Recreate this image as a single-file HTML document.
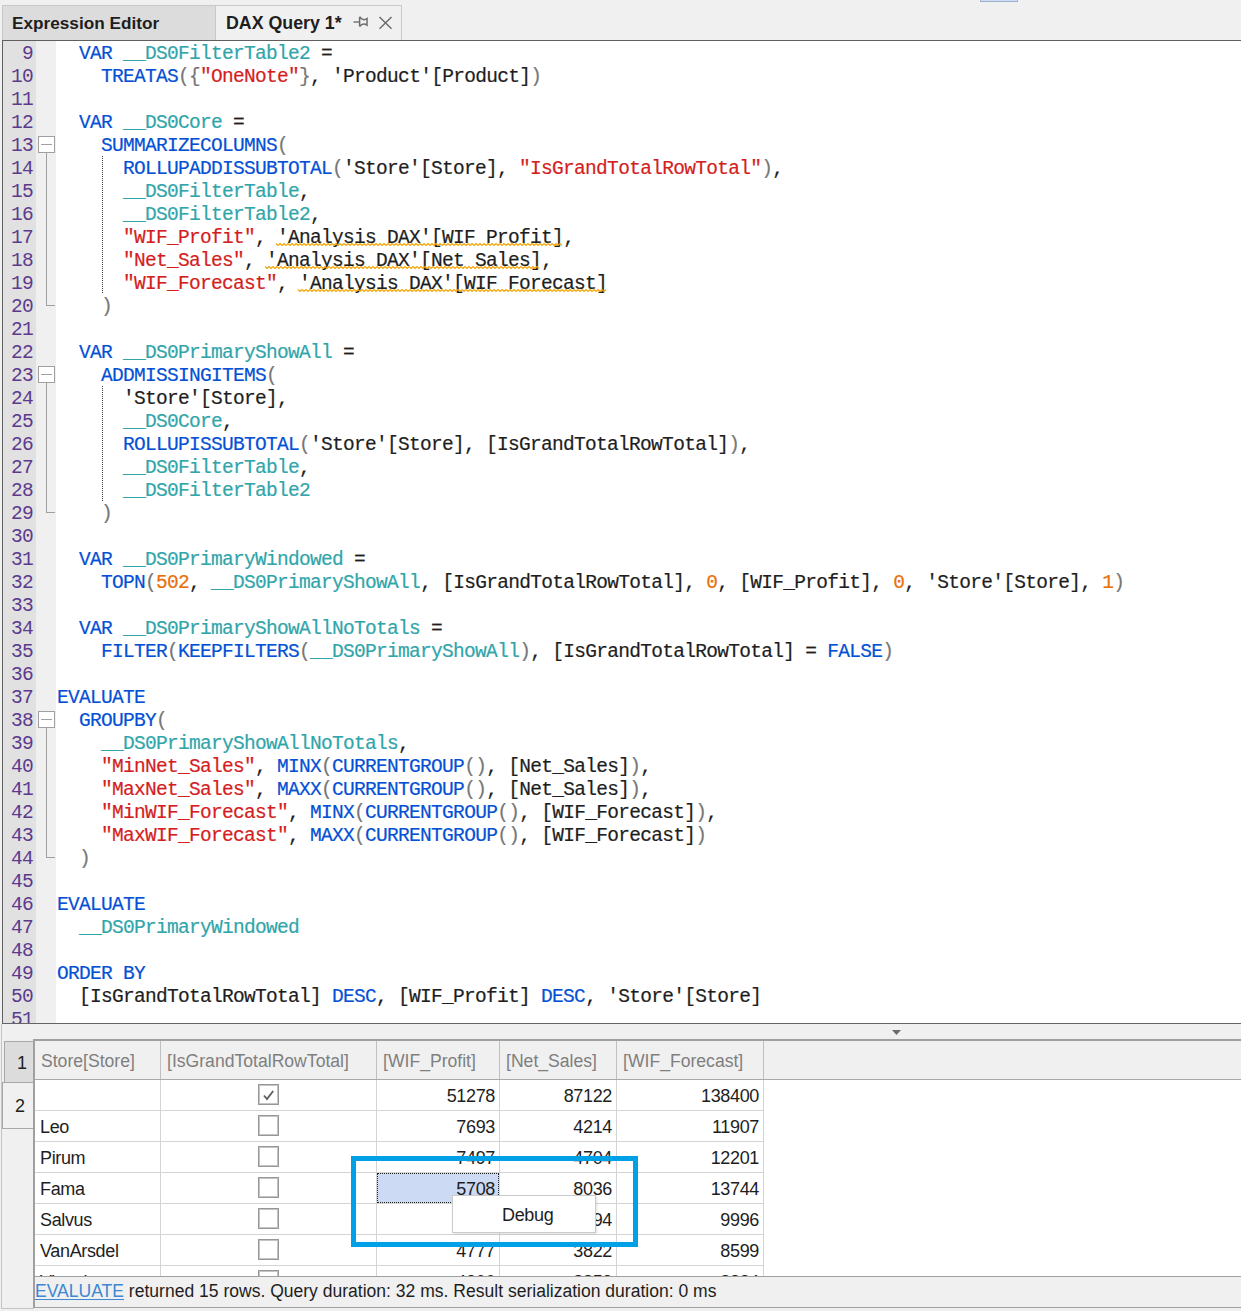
<!DOCTYPE html>
<html><head><meta charset="utf-8">
<style>
*{box-sizing:border-box;margin:0;padding:0}
html,body{width:1241px;height:1311px;overflow:hidden;background:#f0f0f0}
body{position:relative;font-family:"Liberation Sans",sans-serif}
.a{position:absolute}
#mini{left:980px;top:-3px;width:38px;height:5px;background:#cddcf4;border:1px solid #9fb0cc}
#tab1{left:2px;top:5px;width:214px;height:35px;background:#dcdcdc;border:1px solid #c8c8c8;border-bottom:none}
#tab2{left:215px;top:5px;width:187px;height:35px;background:#f0f0f0;border:1px solid #c8c8c8;border-bottom:none}
.tabt{position:absolute;top:7px;font-weight:bold;font-size:17.2px;color:#1e1e1e;white-space:nowrap}
#editor{left:2px;top:40px;width:1239px;height:984px;background:#fff;border-top:1px solid #5f5f5f;border-left:1px solid #5f5f5f;border-bottom:1px solid #646464;overflow:hidden}
#gut{left:0;top:0;width:33px;height:100%;background:#e1e1e1}
#fold{left:33px;top:0;width:20px;height:100%;background:#f0f0f0}
#nums{left:0;top:2px;width:30px;}
.nm{height:23px;line-height:23px;text-align:right;padding-right:0px;font-family:"Liberation Mono",monospace;font-size:19.5px;letter-spacing:-0.7px;color:#5b3a8e}
#code{left:54px;top:2px;}
.ln{height:23px;line-height:23px;white-space:pre;font-family:"Liberation Mono",monospace;font-size:19.5px;letter-spacing:-0.7px;color:#1e1e1e;-webkit-text-stroke:0.2px currentColor}
i{font-style:normal}
.k{color:#0550d4}
.v{color:#30a5aa}
.s{color:#d41e1e}
.n{color:#ea6f0a}
.p{color:#777}
.w{}
.fbox{width:17px;height:17px;border:1px solid #a0a0a0;background:#fff}
.fbox:after{content:"";position:absolute;left:2px;top:7px;width:11px;height:1px;background:#a0a0a0}
.fv{width:1px;background:#a0a0a0}
.fh{height:1px;background:#a0a0a0}
.guide{width:1px;background-image:linear-gradient(#404040 50%,transparent 50%);background-size:1px 2px}
/* grid */
.gl{background:#d4d4d4}
.hdr{font-size:17.6px;color:#7f7f7f;white-space:nowrap}
.cell{font-size:18px;letter-spacing:-0.35px;color:#1e1e1e;white-space:nowrap}
.num{text-align:right}
.cb{width:21px;height:21px;border:1px solid #979797;box-shadow:inset 0 0 0 1px #c4c4c4;background:#fff}
</style></head><body>
<div id="mini" class="a"></div>
<div id="tab1" class="a"><span class="tabt" style="left:9px">Expression Editor</span></div>
<div id="tab2" class="a"><span class="tabt" style="left:10px;font-size:17.8px">DAX Query 1*</span>
<svg class="a" style="left:136px;top:8px" width="20" height="22" viewBox="352 14 20 22"><path d="M353.5 22H359.5" stroke="#6d6d6d" stroke-width="1.4" fill="none"/><path d="M359.6 16.8V26.5M359.6 16.8Q363 21.5 367 18.5V25.2Q363 22.3 359.6 26.5" stroke="#6d6d6d" stroke-width="1.5" fill="none"/></svg>
<svg class="a" style="left:161px;top:9px" width="16" height="16" viewBox="377 15 16 16"><path d="M379.5 17L391.5 28.8M391.5 17L379.5 28.8" stroke="#6d6d6d" stroke-width="1.5" fill="none"/></svg>
</div>
<div id="editor" class="a">
  <div id="gut" class="a"></div>
  <div id="fold" class="a"></div>
  <div id="nums" class="a"><div class="nm">9</div><div class="nm">10</div><div class="nm">11</div><div class="nm">12</div><div class="nm">13</div><div class="nm">14</div><div class="nm">15</div><div class="nm">16</div><div class="nm">17</div><div class="nm">18</div><div class="nm">19</div><div class="nm">20</div><div class="nm">21</div><div class="nm">22</div><div class="nm">23</div><div class="nm">24</div><div class="nm">25</div><div class="nm">26</div><div class="nm">27</div><div class="nm">28</div><div class="nm">29</div><div class="nm">30</div><div class="nm">31</div><div class="nm">32</div><div class="nm">33</div><div class="nm">34</div><div class="nm">35</div><div class="nm">36</div><div class="nm">37</div><div class="nm">38</div><div class="nm">39</div><div class="nm">40</div><div class="nm">41</div><div class="nm">42</div><div class="nm">43</div><div class="nm">44</div><div class="nm">45</div><div class="nm">46</div><div class="nm">47</div><div class="nm">48</div><div class="nm">49</div><div class="nm">50</div><div class="nm">51</div></div>
  <div id="code" class="a"><div class="ln">  <i class="k">VAR</i> <i class="v">__DS0FilterTable2</i> =</div><div class="ln">    <i class="k">TREATAS</i><i class="p">(</i><i class="p">{</i><i class="s">"OneNote"</i><i class="p">}</i>, 'Product'[Product]<i class="p">)</i></div><div class="ln"></div><div class="ln">  <i class="k">VAR</i> <i class="v">__DS0Core</i> =</div><div class="ln">    <i class="k">SUMMARIZECOLUMNS</i><i class="p">(</i></div><div class="ln">      <i class="k">ROLLUPADDISSUBTOTAL</i><i class="p">(</i>'Store'[Store], <i class="s">"IsGrandTotalRowTotal"</i><i class="p">)</i>,</div><div class="ln">      <i class="v">__DS0FilterTable</i>,</div><div class="ln">      <i class="v">__DS0FilterTable2</i>,</div><div class="ln">      <i class="s">"WIF_Profit"</i>, <i class="w">'Analysis DAX'[WIF Profit]</i>,</div><div class="ln">      <i class="s">"Net_Sales"</i>, <i class="w">'Analysis DAX'[Net Sales]</i>,</div><div class="ln">      <i class="s">"WIF_Forecast"</i>, <i class="w">'Analysis DAX'[WIF Forecast]</i></div><div class="ln">    <i class="p">)</i></div><div class="ln"></div><div class="ln">  <i class="k">VAR</i> <i class="v">__DS0PrimaryShowAll</i> =</div><div class="ln">    <i class="k">ADDMISSINGITEMS</i><i class="p">(</i></div><div class="ln">      'Store'[Store],</div><div class="ln">      <i class="v">__DS0Core</i>,</div><div class="ln">      <i class="k">ROLLUPISSUBTOTAL</i><i class="p">(</i>'Store'[Store], [IsGrandTotalRowTotal]<i class="p">)</i>,</div><div class="ln">      <i class="v">__DS0FilterTable</i>,</div><div class="ln">      <i class="v">__DS0FilterTable2</i></div><div class="ln">    <i class="p">)</i></div><div class="ln"></div><div class="ln">  <i class="k">VAR</i> <i class="v">__DS0PrimaryWindowed</i> =</div><div class="ln">    <i class="k">TOPN</i><i class="p">(</i><i class="n">502</i>, <i class="v">__DS0PrimaryShowAll</i>, [IsGrandTotalRowTotal], <i class="n">0</i>, [WIF_Profit], <i class="n">0</i>, 'Store'[Store], <i class="n">1</i><i class="p">)</i></div><div class="ln"></div><div class="ln">  <i class="k">VAR</i> <i class="v">__DS0PrimaryShowAllNoTotals</i> =</div><div class="ln">    <i class="k">FILTER</i><i class="p">(</i><i class="k">KEEPFILTERS</i><i class="p">(</i><i class="v">__DS0PrimaryShowAll</i><i class="p">)</i>, [IsGrandTotalRowTotal] = <i class="k">FALSE</i><i class="p">)</i></div><div class="ln"></div><div class="ln"><i class="k">EVALUATE</i></div><div class="ln">  <i class="k">GROUPBY</i><i class="p">(</i></div><div class="ln">    <i class="v">__DS0PrimaryShowAllNoTotals</i>,</div><div class="ln">    <i class="s">"MinNet_Sales"</i>, <i class="k">MINX</i><i class="p">(</i><i class="k">CURRENTGROUP</i><i class="p">(</i><i class="p">)</i>, [Net_Sales]<i class="p">)</i>,</div><div class="ln">    <i class="s">"MaxNet_Sales"</i>, <i class="k">MAXX</i><i class="p">(</i><i class="k">CURRENTGROUP</i><i class="p">(</i><i class="p">)</i>, [Net_Sales]<i class="p">)</i>,</div><div class="ln">    <i class="s">"MinWIF_Forecast"</i>, <i class="k">MINX</i><i class="p">(</i><i class="k">CURRENTGROUP</i><i class="p">(</i><i class="p">)</i>, [WIF_Forecast]<i class="p">)</i>,</div><div class="ln">    <i class="s">"MaxWIF_Forecast"</i>, <i class="k">MAXX</i><i class="p">(</i><i class="k">CURRENTGROUP</i><i class="p">(</i><i class="p">)</i>, [WIF_Forecast]<i class="p">)</i></div><div class="ln">  <i class="p">)</i></div><div class="ln"></div><div class="ln"><i class="k">EVALUATE</i></div><div class="ln">  <i class="v">__DS0PrimaryWindowed</i></div><div class="ln"></div><div class="ln"><i class="k">ORDER</i> <i class="k">BY</i></div><div class="ln">  [IsGrandTotalRowTotal] <i class="k">DESC</i>, [WIF_Profit] <i class="k">DESC</i>, 'Store'[Store]</div><div class="ln"></div></div>
</div>
<svg class="a" style="left:0;top:0" width="1241" height="1023"><polyline points="276,243.5 278,245.5 280,243.5 282,245.5 284,243.5 286,245.5 288,243.5 290,245.5 292,243.5 294,245.5 296,243.5 298,245.5 300,243.5 302,245.5 304,243.5 306,245.5 308,243.5 310,245.5 312,243.5 314,245.5 316,243.5 318,245.5 320,243.5 322,245.5 324,243.5 326,245.5 328,243.5 330,245.5 332,243.5 334,245.5 336,243.5 338,245.5 340,243.5 342,245.5 344,243.5 346,245.5 348,243.5 350,245.5 352,243.5 354,245.5 356,243.5 358,245.5 360,243.5 362,245.5 364,243.5 366,245.5 368,243.5 370,245.5 372,243.5 374,245.5 376,243.5 378,245.5 380,243.5 382,245.5 384,243.5 386,245.5 388,243.5 390,245.5 392,243.5 394,245.5 396,243.5 398,245.5 400,243.5 402,245.5 404,243.5 406,245.5 408,243.5 410,245.5 412,243.5 414,245.5 416,243.5 418,245.5 420,243.5 422,245.5 424,243.5 426,245.5 428,243.5 430,245.5 432,243.5 434,245.5 436,243.5 438,245.5 440,243.5 442,245.5 444,243.5 446,245.5 448,243.5 450,245.5 452,243.5 454,245.5 456,243.5 458,245.5 460,243.5 462,245.5 464,243.5 466,245.5 468,243.5 470,245.5 472,243.5 474,245.5 476,243.5 478,245.5 480,243.5 482,245.5 484,243.5 486,245.5 488,243.5 490,245.5 492,243.5 494,245.5 496,243.5 498,245.5 500,243.5 502,245.5 504,243.5 506,245.5 508,243.5 510,245.5 512,243.5 514,245.5 516,243.5 518,245.5 520,243.5 522,245.5 524,243.5 526,245.5 528,243.5 530,245.5 532,243.5 534,245.5 536,243.5 538,245.5 540,243.5 542,245.5 544,243.5 546,245.5 548,243.5 550,245.5 552,243.5 554,245.5 556,243.5 558,245.5 560,243.5 562,245.5" fill="none" stroke="#f5a300" stroke-width="1.1"/><polyline points="265,266.5 267,268.5 269,266.5 271,268.5 273,266.5 275,268.5 277,266.5 279,268.5 281,266.5 283,268.5 285,266.5 287,268.5 289,266.5 291,268.5 293,266.5 295,268.5 297,266.5 299,268.5 301,266.5 303,268.5 305,266.5 307,268.5 309,266.5 311,268.5 313,266.5 315,268.5 317,266.5 319,268.5 321,266.5 323,268.5 325,266.5 327,268.5 329,266.5 331,268.5 333,266.5 335,268.5 337,266.5 339,268.5 341,266.5 343,268.5 345,266.5 347,268.5 349,266.5 351,268.5 353,266.5 355,268.5 357,266.5 359,268.5 361,266.5 363,268.5 365,266.5 367,268.5 369,266.5 371,268.5 373,266.5 375,268.5 377,266.5 379,268.5 381,266.5 383,268.5 385,266.5 387,268.5 389,266.5 391,268.5 393,266.5 395,268.5 397,266.5 399,268.5 401,266.5 403,268.5 405,266.5 407,268.5 409,266.5 411,268.5 413,266.5 415,268.5 417,266.5 419,268.5 421,266.5 423,268.5 425,266.5 427,268.5 429,266.5 431,268.5 433,266.5 435,268.5 437,266.5 439,268.5 441,266.5 443,268.5 445,266.5 447,268.5 449,266.5 451,268.5 453,266.5 455,268.5 457,266.5 459,268.5 461,266.5 463,268.5 465,266.5 467,268.5 469,266.5 471,268.5 473,266.5 475,268.5 477,266.5 479,268.5 481,266.5 483,268.5 485,266.5 487,268.5 489,266.5 491,268.5 493,266.5 495,268.5 497,266.5 499,268.5 501,266.5 503,268.5 505,266.5 507,268.5 509,266.5 511,268.5 513,266.5 515,268.5 517,266.5 519,268.5 521,266.5 523,268.5 525,266.5 527,268.5 529,266.5 531,268.5 533,266.5 535,268.5 537,266.5 539,268.5" fill="none" stroke="#f5a300" stroke-width="1.1"/><polyline points="298,289.5 300,291.5 302,289.5 304,291.5 306,289.5 308,291.5 310,289.5 312,291.5 314,289.5 316,291.5 318,289.5 320,291.5 322,289.5 324,291.5 326,289.5 328,291.5 330,289.5 332,291.5 334,289.5 336,291.5 338,289.5 340,291.5 342,289.5 344,291.5 346,289.5 348,291.5 350,289.5 352,291.5 354,289.5 356,291.5 358,289.5 360,291.5 362,289.5 364,291.5 366,289.5 368,291.5 370,289.5 372,291.5 374,289.5 376,291.5 378,289.5 380,291.5 382,289.5 384,291.5 386,289.5 388,291.5 390,289.5 392,291.5 394,289.5 396,291.5 398,289.5 400,291.5 402,289.5 404,291.5 406,289.5 408,291.5 410,289.5 412,291.5 414,289.5 416,291.5 418,289.5 420,291.5 422,289.5 424,291.5 426,289.5 428,291.5 430,289.5 432,291.5 434,289.5 436,291.5 438,289.5 440,291.5 442,289.5 444,291.5 446,289.5 448,291.5 450,289.5 452,291.5 454,289.5 456,291.5 458,289.5 460,291.5 462,289.5 464,291.5 466,289.5 468,291.5 470,289.5 472,291.5 474,289.5 476,291.5 478,289.5 480,291.5 482,289.5 484,291.5 486,289.5 488,291.5 490,289.5 492,291.5 494,289.5 496,291.5 498,289.5 500,291.5 502,289.5 504,291.5 506,289.5 508,291.5 510,289.5 512,291.5 514,289.5 516,291.5 518,289.5 520,291.5 522,289.5 524,291.5 526,289.5 528,291.5 530,289.5 532,291.5 534,289.5 536,291.5 538,289.5 540,291.5 542,289.5 544,291.5 546,289.5 548,291.5 550,289.5 552,291.5 554,289.5 556,291.5 558,289.5 560,291.5 562,289.5 564,291.5 566,289.5 568,291.5 570,289.5 572,291.5 574,289.5 576,291.5 578,289.5 580,291.5 582,289.5 584,291.5 586,289.5 588,291.5 590,289.5 592,291.5 594,289.5 596,291.5 598,289.5 600,291.5 602,289.5 604,291.5 606,289.5" fill="none" stroke="#f5a300" stroke-width="1.1"/></svg>
<!-- folding markers (body coords) -->
<div class="a fbox" style="left:38px;top:136px"></div>
<div class="a fv" style="left:46px;top:153px;height:153px"></div>
<div class="a fh" style="left:46px;top:305px;width:9px"></div>
<div class="a fbox" style="left:38px;top:366px"></div>
<div class="a fv" style="left:46px;top:383px;height:130px"></div>
<div class="a fh" style="left:46px;top:512px;width:9px"></div>
<div class="a fbox" style="left:38px;top:711px"></div>
<div class="a fv" style="left:46px;top:728px;height:130px"></div>
<div class="a fh" style="left:46px;top:857px;width:9px"></div>
<div class="a guide" style="left:102px;top:156px;height:138px"></div>
<div class="a guide" style="left:102px;top:386px;height:115px"></div>
<!-- splitter -->
<svg class="a" style="left:890px;top:1028px" width="14" height="8"><path d="M2 2H11L6.5 7Z" fill="#6a6a6a"/></svg>
<!-- left panel lines -->
<div class="a" style="left:1px;top:1024px;width:1px;height:285px;background:#c4c4c4"></div>
<div class="a" style="left:1px;top:1308px;width:33px;height:1px;background:#c4c4c4"></div>
<div class="a" style="left:4px;top:1041px;width:30px;height:42px;background:#dcdcdc;border:1px solid #a8a8a8;border-right:none"></div>
<div class="a" style="left:2px;top:1082px;width:32px;height:47px;background:#f0f0f0;border:1px solid #a8a8a8;border-right:none"></div>
<div class="a cell" style="left:17px;top:1053px">1</div>
<div class="a cell" style="left:15px;top:1096px">2</div>
<div class="a" style="left:33px;top:1039px;width:1208px;height:238px;background:#fff;border-left:2px solid #a0a0a0;border-top:2px solid #a0a0a0;overflow:hidden"><div class="a" style="left:0;top:0;width:1206px;height:39px;background:#f0f0f0;border-bottom:1px solid #a8a8a8"></div><div class="a hdr" style="left:6px;top:10px">Store[Store]</div><div class="a hdr" style="left:132px;top:10px">[IsGrandTotalRowTotal]</div><div class="a hdr" style="left:348px;top:10px">[WIF_Profit]</div><div class="a hdr" style="left:471px;top:10px">[Net_Sales]</div><div class="a hdr" style="left:588px;top:10px">[WIF_Forecast]</div><div class="a" style="left:125px;top:0;width:1px;height:38px;background:#c0c0c0"></div><div class="a gl" style="left:125px;top:39px;width:1px;height:200px"></div><div class="a" style="left:341px;top:0;width:1px;height:38px;background:#c0c0c0"></div><div class="a gl" style="left:341px;top:39px;width:1px;height:200px"></div><div class="a" style="left:464px;top:0;width:1px;height:38px;background:#c0c0c0"></div><div class="a gl" style="left:464px;top:39px;width:1px;height:200px"></div><div class="a" style="left:581px;top:0;width:1px;height:38px;background:#c0c0c0"></div><div class="a gl" style="left:581px;top:39px;width:1px;height:200px"></div><div class="a" style="left:728px;top:0;width:1px;height:38px;background:#c0c0c0"></div><div class="a gl" style="left:728px;top:39px;width:1px;height:200px"></div><div class="a gl" style="left:0;top:69px;width:729px;height:1px"></div><div class="a gl" style="left:0;top:100px;width:729px;height:1px"></div><div class="a gl" style="left:0;top:131px;width:729px;height:1px"></div><div class="a gl" style="left:0;top:162px;width:729px;height:1px"></div><div class="a gl" style="left:0;top:193px;width:729px;height:1px"></div><div class="a gl" style="left:0;top:224px;width:729px;height:1px"></div><div class="a" style="left:342px;top:132px;width:122px;height:30px;background:#ccdaf4;border:1px dotted #222"></div><div class="a cb" style="left:223px;top:43px"></div><svg class="a" style="left:227px;top:47px" width="14" height="14"><path d="M2 7.5L5 11L11.2 3" stroke="#5e5e5e" stroke-width="1.9" fill="none"/></svg><div class="a cell num" style="left:341px;width:119px;top:45px">51278</div><div class="a cell num" style="left:464px;width:113px;top:45px">87122</div><div class="a cell num" style="left:581px;width:143px;top:45px">138400</div><div class="a cell" style="left:5px;top:76px">Leo</div><div class="a cb" style="left:223px;top:74px"></div><div class="a cell num" style="left:341px;width:119px;top:76px">7693</div><div class="a cell num" style="left:464px;width:113px;top:76px">4214</div><div class="a cell num" style="left:581px;width:143px;top:76px">11907</div><div class="a cell" style="left:5px;top:107px">Pirum</div><div class="a cb" style="left:223px;top:105px"></div><div class="a cell num" style="left:341px;width:119px;top:107px">7497</div><div class="a cell num" style="left:464px;width:113px;top:107px">4704</div><div class="a cell num" style="left:581px;width:143px;top:107px">12201</div><div class="a cell" style="left:5px;top:138px">Fama</div><div class="a cb" style="left:223px;top:136px"></div><div class="a cell num" style="left:341px;width:119px;top:138px">5708</div><div class="a cell num" style="left:464px;width:113px;top:138px">8036</div><div class="a cell num" style="left:581px;width:143px;top:138px">13744</div><div class="a cell" style="left:5px;top:169px">Salvus</div><div class="a cb" style="left:223px;top:167px"></div><div class="a cell num" style="left:341px;width:119px;top:169px">5109</div><div class="a cell num" style="left:464px;width:113px;top:169px">5194</div><div class="a cell num" style="left:581px;width:143px;top:169px">9996</div><div class="a cell" style="left:5px;top:200px">VanArsdel</div><div class="a cb" style="left:223px;top:198px"></div><div class="a cell num" style="left:341px;width:119px;top:200px">4777</div><div class="a cell num" style="left:464px;width:113px;top:200px">3822</div><div class="a cell num" style="left:581px;width:143px;top:200px">8599</div><div class="a cell" style="left:5px;top:231px">Victoria</div><div class="a cb" style="left:223px;top:229px"></div><div class="a cell num" style="left:341px;width:119px;top:231px">4306</div><div class="a cell num" style="left:464px;width:113px;top:231px">8853</div><div class="a cell num" style="left:581px;width:143px;top:231px">8884</div></div>
<!-- status -->
<div class="a" style="left:33px;top:1276px;width:1208px;height:32px;background:#f0f0f0;border-top:1px solid #a0a0a0;border-bottom:1px solid #a0a0a0;border-left:2px solid #a0a0a0"></div>
<div class="a cell" style="left:35px;top:1281px;font-size:17.55px;letter-spacing:0"><span style="color:#3c88d2;text-decoration:underline;text-underline-offset:2px">EVALUATE</span> returned 15 rows. Query duration: 32 ms. Result serialization duration: 0 ms</div>
<!-- overlay -->
<div class="a" style="left:351px;top:1156px;width:287px;height:91px;border:5px solid #00a0e6"></div>
<div class="a" style="left:452px;top:1195px;width:144px;height:38px;background:#fff;border:1px solid #cbcbcb;box-shadow:1px 1px 2px rgba(0,0,0,.12)"></div>
<div class="a cell" style="left:502px;top:1205px">Debug</div>
</body></html>
